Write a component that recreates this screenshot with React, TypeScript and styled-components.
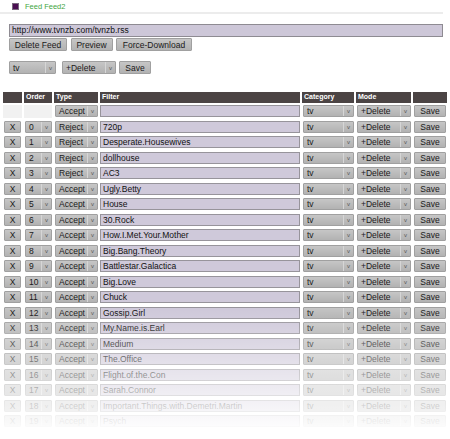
import React from "react";
import styled, { createGlobalStyle } from "styled-components";

const Global = createGlobalStyle`
  html, body { margin: 0; padding: 0; background: #fff; }
  body { font-family: "Liberation Sans", Arial, sans-serif; overflow: hidden; }
`;

const Page = styled.div`
  position: relative;
  width: 450px;
  height: 439px;
  overflow: hidden;
  font-size: 8.5px;
  color: #111;
`;

const TitleBar = styled.div`
  display: flex;
  align-items: center;
  gap: 6px;
  padding: 3px 0 0 12px;
  height: 7px;
`;

const Check = styled.span`
  width: 5px;
  height: 5px;
  background: #4a0e52;
  border: 0.5px solid #7a6a7e;
`;

const Title = styled.span`
  color: #3fa63f;
  font-size: 7.5px;
`;

const Rule = styled.div`
  margin-top: 2px;
  width: 443px;
  height: 1.5px;
  background: #ececec;
`;

const Form = styled.div`
  display: flex;
  flex-direction: column;
  padding: 10.5px 0 0 9px;
`;

const UrlInput = styled.div`
  box-sizing: border-box;
  width: 434px;
  height: 13px;
  background: #cdc7d8;
  border: 1px solid #8e8b92;
  padding: 0 2px;
  line-height: 11px;
  font-size: 8.5px;
  color: #111;
`;

const Row = styled.div<{ $gap: number; $top?: number }>`
  display: flex;
  gap: ${(p) => p.$gap}px;
  margin-top: ${(p) => p.$top ?? 0}px;
`;

const Btn = styled.div<{ $w: number; $h?: number }>`
  box-sizing: border-box;
  width: ${(p) => p.$w}px;
  height: ${(p) => p.$h ?? 13}px;
  background: linear-gradient(#c6c6c6, #b2b2b2);
  border: 1px solid #a0a0a0;
  border-radius: 1px;
  display: flex;
  align-items: center;
  justify-content: center;
  font-size: 8.5px;
  color: #1a1a1a;
`;

const Sel = styled.div<{ $w: number; $h?: number }>`
  box-sizing: border-box;
  width: ${(p) => p.$w}px;
  height: ${(p) => p.$h ?? 13}px;
  background: linear-gradient(#c6c6c6, #b2b2b2);
  border: 1px solid #a0a0a0;
  border-radius: 1px;
  display: flex;
  align-items: center;
  font-size: 8.5px;
  color: #1a1a1a;
`;

const SelText = styled.span`
  flex: 1;
  padding-left: 3px;
  white-space: nowrap;
  overflow: hidden;
`;

const SelArrow = styled.span`
  width: 9px;
  align-self: stretch;
  border-left: 1px solid #d6d6d6;
  display: flex;
  align-items: center;
  justify-content: center;
  color: #555;
  font-size: 6px;
`;

const Select: React.FC<{ w: number; h?: number; children: React.ReactNode }> = ({ w, h, children }) => (
  <Sel $w={w} $h={h}>
    <SelText>{children}</SelText>
    <SelArrow>v</SelArrow>
  </Sel>
);

const Grid = styled.div`
  display: grid;
  grid-template-columns: 19px 28px 44px 200px 52px 55px 34px;
  grid-template-rows: 10.5px;
  grid-auto-rows: 13.5px;
  column-gap: 2px;
  row-gap: 2px;
  margin: 18px 0 0 3px;
`;

const Head = styled.div`
  background: #4b4444;
  color: #fff;
  font-weight: bold;
  font-size: 7px;
  line-height: 10.5px;
  padding-left: 2px;
`;

const Cell = styled.div<{ $empty?: boolean; $pad?: number }>`
  display: flex;
  align-items: center;
  background: ${(p) => (p.$empty ? "#f1f1f1" : "transparent")};
  padding-left: ${(p) => p.$pad ?? 1}px;
`;

const FilterInput = styled.div`
  box-sizing: border-box;
  width: 200px;
  height: 12px;
  background: #cfc9da;
  border: 1px solid #97949b;
  padding-left: 2px;
  line-height: 10px;
  font-size: 8.5px;
  color: #111;
  white-space: nowrap;
  overflow: hidden;
`;

const Fade = styled.div`
  position: absolute;
  left: 0;
  right: 0;
  top: 310px;
  bottom: 0;
  background: linear-gradient(rgba(255, 255, 255, 0), rgba(255, 255, 255, 0.97) 92%, #fff);
  pointer-events: none;
`;

const rows: [string, string][] = [
  ["Reject", "720p"],
  ["Reject", "Desperate.Housewives"],
  ["Reject", "dollhouse"],
  ["Reject", "AC3"],
  ["Accept", "Ugly.Betty"],
  ["Accept", "House"],
  ["Accept", "30.Rock"],
  ["Accept", "How.I.Met.Your.Mother"],
  ["Accept", "Big.Bang.Theory"],
  ["Accept", "Battlestar.Galactica"],
  ["Accept", "Big.Love"],
  ["Accept", "Chuck"],
  ["Accept", "Gossip.Girl"],
  ["Accept", "My.Name.is.Earl"],
  ["Accept", "Medium"],
  ["Accept", "The.Office"],
  ["Accept", "Flight.of.the.Con"],
  ["Accept", "Sarah.Connor"],
  ["Accept", "Important.Things.with.Demetri.Martin"],
  ["Accept", "Psych"],
];

export default function App() {
  return (
    <Page>
      <Global />
      <TitleBar>
        <Check />
        <Title>Feed Feed2</Title>
      </TitleBar>
      <Rule />
      <Form>
        <UrlInput>http://www.tvnzb.com/tvnzb.rss</UrlInput>
        <Row $gap={3.5} $top={1}>
          <Btn $w={58}>Delete Feed</Btn>
          <Btn $w={42}>Preview</Btn>
          <Btn $w={76}>Force-Download</Btn>
        </Row>
        <Row $gap={6} $top={10}>
          <Select w={47}>tv</Select>
          <Row $gap={3}>
            <Select w={54}>+Delete</Select>
            <Btn $w={32}>Save</Btn>
          </Row>
        </Row>
      </Form>
      <Grid>
        <Head />
        <Head>Order</Head>
        <Head>Type</Head>
        <Head>Filter</Head>
        <Head>Category</Head>
        <Head>Mode</Head>
        <Head />

        <Cell $empty />
        <Cell $empty />
        <Cell>
          <Select w={43} h={12}>Accept</Select>
        </Cell>
        <Cell $pad={0}>
          <FilterInput />
        </Cell>
        <Cell>
          <Select w={51} h={12}>tv</Select>
        </Cell>
        <Cell>
          <Select w={54} h={12}>+Delete</Select>
        </Cell>
        <Cell>
          <Btn $w={32} $h={12}>Save</Btn>
        </Cell>

        {rows.map(([type, filter], i) => (
          <React.Fragment key={i}>
            <Cell>
              <Btn $w={17} $h={12}>X</Btn>
            </Cell>
            <Cell>
              <Select w={27} h={12}>{i}</Select>
            </Cell>
            <Cell>
              <Select w={43} h={12}>{type}</Select>
            </Cell>
            <Cell $pad={0}>
              <FilterInput>{filter}</FilterInput>
            </Cell>
            <Cell>
              <Select w={51} h={12}>tv</Select>
            </Cell>
            <Cell>
              <Select w={54} h={12}>+Delete</Select>
            </Cell>
            <Cell>
              <Btn $w={32} $h={12}>Save</Btn>
            </Cell>
          </React.Fragment>
        ))}
      </Grid>
      <Fade />
    </Page>
  );
}
